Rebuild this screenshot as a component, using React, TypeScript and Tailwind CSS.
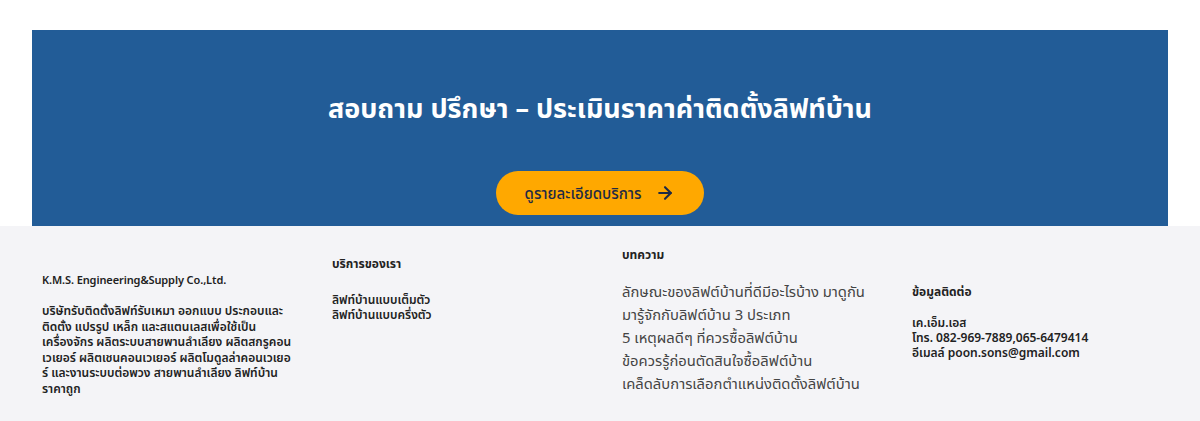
import { ArrowRight } from "lucide-react";

const articles = [
  "ลักษณะของลิฟต์บ้านที่ดีมีอะไรบ้าง มาดูกัน",
  "มารู้จักกับลิฟต์บ้าน 3 ประเภท",
  "5 เหตุผลดีๆ ที่ควรซื้อลิฟต์บ้าน",
  "ข้อควรรู้ก่อนตัดสินใจซื้อลิฟต์บ้าน",
  "เคล็ดลับการเลือกตำแหน่งติดตั้งลิฟต์บ้าน",
];

export default function App() {
  return (
    <div className="bg-white font-['Noto_Sans','Noto_Sans_Thai',sans-serif]">
      {/* CTA banner */}
      <div className="px-[32px] pt-[30px]">
        <div className="h-[196px] bg-[#225c97] flex flex-col items-center">
          <h2 className="mt-[60px] text-white text-[27px] font-bold leading-[36px]">
            สอบถาม ปรึกษา – ประเมินราคาค่าติดตั้งลิฟท์บ้าน
          </h2>
          <button className="mt-[45px] h-[44px] w-[208px] rounded-full bg-[#ffa800] text-[#1e2a45] text-[15px] font-medium flex items-center justify-center gap-[14px]">
            ดูรายละเอียดบริการ
            <ArrowRight size={20} strokeWidth={2.5} />
          </button>
        </div>
      </div>

      {/* Footer */}
      <footer className="h-[195px] bg-[#f4f4f7] pl-[42px] flex overflow-hidden text-[12px] leading-[15px] text-[#222] font-semibold">
        <div className="w-[290px] shrink-0 pt-[46px] pr-[38px]">
          <p className="text-[11px] tracking-[-0.1px]">K.M.S. Engineering&amp;Supply Co.,Ltd.</p>
          <p className="mt-[16px] leading-[15.5px]">
            บริษัทรับติดตั้งลิฟท์รับเหมา ออกแบบ ประกอบและติดตั้ง แปรรูป เหล็ก และสแตนเลสเพื่อใช้เป็นเครื่องจักร ผลิตระบบสายพานลำเลียง ผลิตสกรูคอนเวเยอร์ ผลิตเชนคอนเวเยอร์ ผลิตโมดูลล่าคอนเวเยอร์ และงานระบบต่อพวง สายพานลำเลียง ลิฟท์บ้าน ราคาถูก
          </p>
        </div>
        <div className="w-[290px] shrink-0 pt-[30px]">
          <p className="font-bold">บริการของเรา</p>
          <ul className="mt-[21px]">
            <li>ลิฟท์บ้านแบบเต็มตัว</li>
            <li>ลิฟท์บ้านแบบครึ่งตัว</li>
          </ul>
        </div>
        <div className="w-[290px] shrink-0 pt-[21px]">
          <p className="font-bold">บทความ</p>
          <ul className="mt-[18px] text-[14.8px] leading-[23px] font-normal text-[#444]">
            {articles.map((a) => (
              <li key={a}>{a}</li>
            ))}
          </ul>
        </div>
        <div className="w-[250px] shrink-0 pt-[58px]">
          <p className="font-bold">ข้อมูลติดต่อ</p>
          <div className="mt-[16px]">
            <p>เค.เอ็ม.เอส</p>
            <p>โทร. 082-969-7889,065-6479414</p>
            <p>อีเมลล์ poon.sons@gmail.com</p>
          </div>
        </div>
      </footer>
    </div>
  );
}
